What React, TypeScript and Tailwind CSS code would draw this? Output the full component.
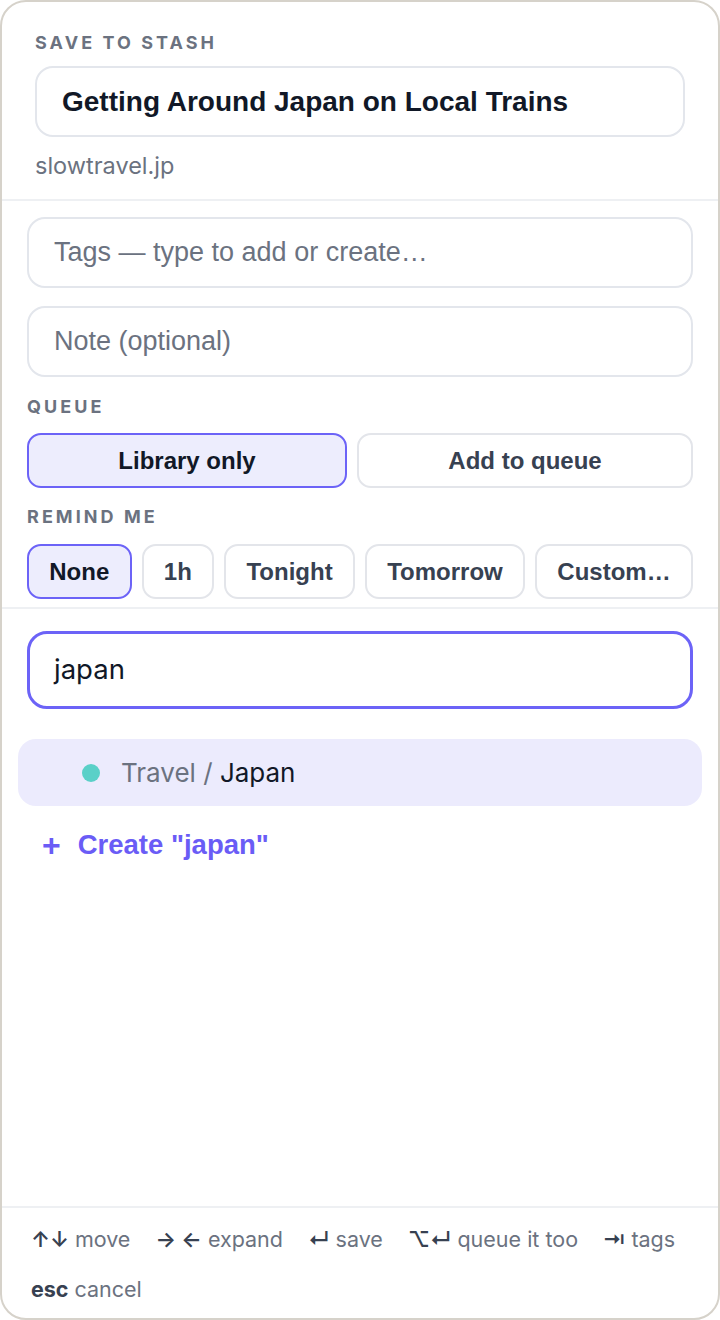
const sans = "font-['Inter','Noto_Sans',sans-serif]";
const ui = "font-['Liberation_Sans','Arial',sans-serif]";

const queueOptions = [
  { label: "Library only", active: true },
  { label: "Add to queue", active: false },
];

const remindOptions = [
  { label: "None", active: true },
  { label: "1h", active: false },
  { label: "Tonight", active: false },
  { label: "Tomorrow", active: false },
  { label: "Custom…", active: false },
];

const shortcuts = [
  { keys: "↑↓", label: "move" },
  { keys: "→ ←", label: "expand" },
  { keys: "↵", label: "save" },
  { keys: "⌥↵", label: "queue it too" },
  { keys: "⇥", label: "tags" },
  { keys: "esc", label: "cancel", bold: true },
];

function Label({ children }: { children: string }) {
  return (
    <div className={`${sans} text-[18px] leading-[22px] font-bold tracking-[0.17em] text-[#6b7280]`}>
      {children}
    </div>
  );
}

function Choice({ label, active }: { label: string; active: boolean }) {
  return (
    <button
      className={`${ui} h-[55px] flex-auto rounded-[14px] border-2 px-[20px] text-[24px] font-bold ${
        active
          ? "border-[#6c63f7] bg-[#ededfd] text-[#111827]"
          : "border-[#e3e5ea] bg-white text-[#374151]"
      }`}
    >
      {label}
    </button>
  );
}

export default function App() {
  return (
    <div className="h-[1320px] w-[720px] bg-white">
      <div className={`${sans} flex h-full flex-col overflow-hidden rounded-[26px] border-2 border-[#d6d2ca] bg-white`}>
        {/* Header */}
        <div className="px-[33px] pt-[30px] pb-[18px]">
          <Label>SAVE TO STASH</Label>
          <div className="mt-[12px] flex h-[71px] items-center rounded-[18px] border-2 border-[#e3e6ec] px-[25px]">
            <span className={`${ui} text-[28px] font-bold text-[#111827]`}>
              Getting Around Japan on Local Trains
            </span>
          </div>
          <div className="mt-[14px] text-[23.5px] leading-[30px] text-[#6b7280]">slowtravel.jp</div>
        </div>

        <div className="h-[2px] bg-[#eef0f3]" />

        {/* Fields */}
        <div className="px-[25px] pt-[16px] pb-[8px]">
          <div className="flex flex-col gap-[18px]">
            <div className="flex h-[71px] items-center rounded-[18px] border-2 border-[#e3e6ec] px-[25px]">
              <span className={`${ui} text-[27px] text-[#6b7280]`}>Tags — type to add or create…</span>
            </div>
            <div className="flex h-[71px] items-center rounded-[18px] border-2 border-[#e3e6ec] px-[25px]">
              <span className={`${ui} text-[27px] text-[#6b7280]`}>Note (optional)</span>
            </div>
          </div>

          <div className="mt-[19px]">
            <Label>QUEUE</Label>
          </div>
          <div className="mt-[15px] flex gap-[10px]">
            {queueOptions.map((o) => (
              <Choice key={o.label} label={o.label} active={o.active} />
            ))}
          </div>

          <div className="mt-[18px]">
            <Label>REMIND ME</Label>
          </div>
          <div className="mt-[16px] flex gap-[10px]">
            {remindOptions.map((o) => (
              <Choice key={o.label} label={o.label} active={o.active} />
            ))}
          </div>
        </div>

        <div className="h-[2px] bg-[#eef0f3]" />

        {/* Tag search */}
        <div className="px-[25px] pt-[22px]">
          <div className="flex h-[78px] items-center rounded-[20px] border-[3px] border-[#6c63f7] px-[24px]">
            <span className="text-[27.5px] text-[#111827]">japan</span>
          </div>
        </div>

        <div className="px-[16px] pt-[30px]">
          <div className="flex h-[67px] items-center gap-[21px] rounded-[18px] bg-[#ecebfd] px-[64px]">
            <span className="h-[18px] w-[18px] rounded-full bg-[#5ad0c8]" />
            <span className="text-[26px] text-[#6b7280]">
              Travel / <span className="text-[#111827]">Japan</span>
            </span>
          </div>
        </div>

        <button className={`${ui} mx-[40px] mt-[18px] flex items-center gap-[17px] text-[27.5px] font-bold text-[#6a5cf6]`}>
          <span className="text-[32px] leading-[34px]">+</span>
          <span>Create "japan"</span>
        </button>

        <div className="flex-1" />

        {/* Shortcuts */}
        <div className="h-[2px] bg-[#eef0f3]" />
        <div className="flex flex-wrap gap-x-[25px] gap-y-[20px] px-[29px] pt-[16px] pb-[14px] text-[21.5px] leading-[30px]">
          {shortcuts.map((s) => (
            <span key={s.label} className="flex items-center gap-[6px]">
              <span className={`text-[#374151] ${s.bold ? "font-bold" : "font-semibold"}`}>{s.keys}</span>
              <span className="text-[#6b7280]">{s.label}</span>
            </span>
          ))}
        </div>
      </div>
    </div>
  );
}
